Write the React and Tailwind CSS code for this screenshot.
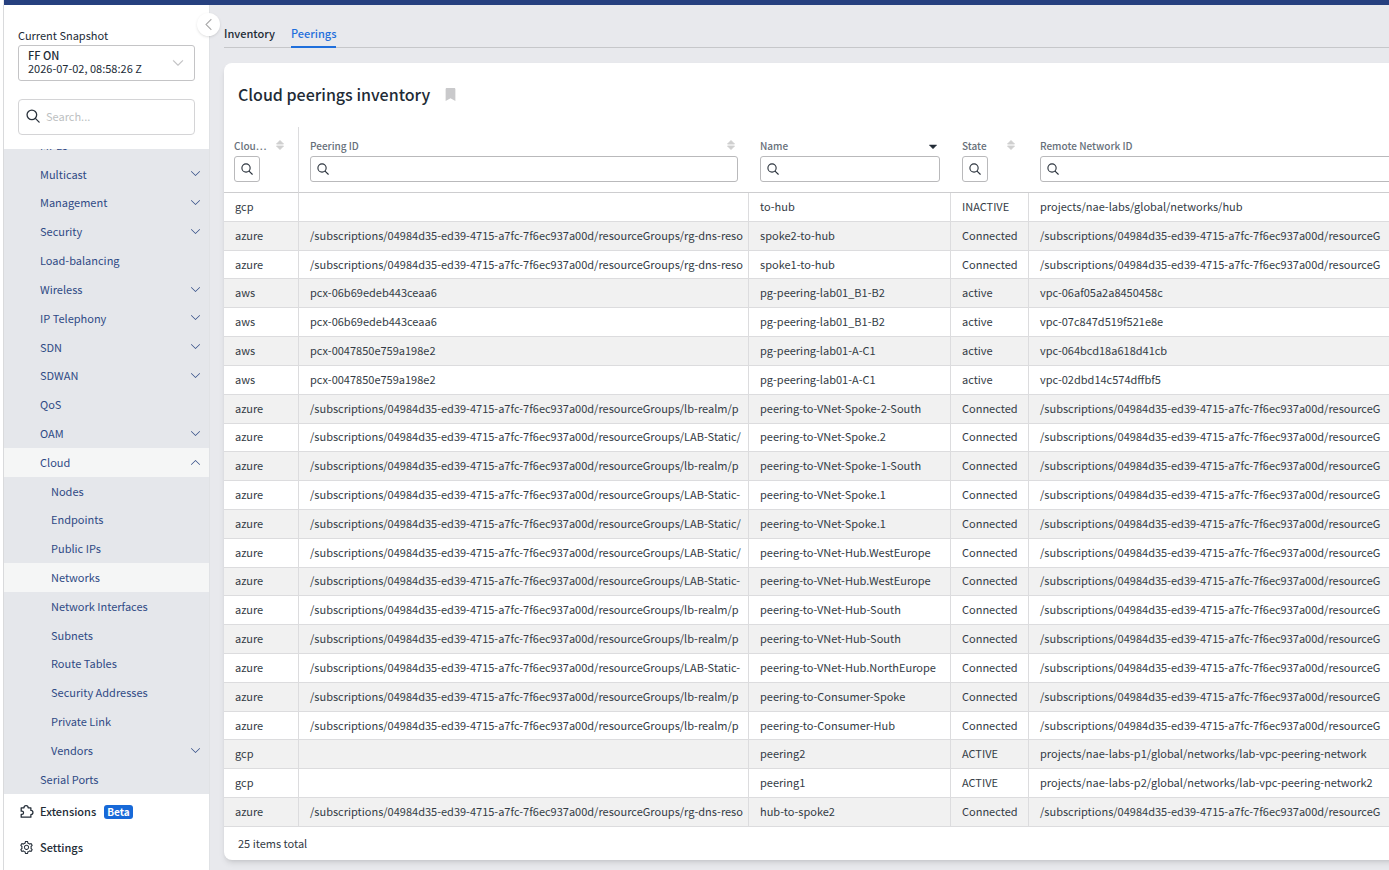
import React, { useState } from "react";
import { AiOutlineSetting } from "react-icons/ai";
import { BsChevronDown, BsChevronLeft, BsChevronUp } from "react-icons/bs";
import { FaBookmark } from "react-icons/fa";

const navItems = [
  { label: "Multicast", arrow: true },
  { label: "Management", arrow: true },
  { label: "Security", arrow: true },
  { label: "Load-balancing" },
  { label: "Wireless", arrow: true },
  { label: "IP Telephony", arrow: true },
  { label: "SDN", arrow: true },
  { label: "SDWAN", arrow: true },
  { label: "QoS" },
  { label: "OAM", arrow: true },
  { label: "Cloud", arrow: true, open: true, active: true },
  { label: "Nodes", child: true },
  { label: "Endpoints", child: true },
  { label: "Public IPs", child: true },
  { label: "Networks", child: true, active: true },
  { label: "Network Interfaces", child: true },
  { label: "Subnets", child: true },
  { label: "Route Tables", child: true },
  { label: "Security Addresses", child: true },
  { label: "Private Link", child: true },
  { label: "Vendors", child: true, arrow: true },
  { label: "Serial Ports" },
];

const remote = "/subscriptions/04984d35-ed39-4715-a7fc-7f6ec937a00d/resourceG";
const base = remote + "roups/";
const dns = base + "rg-dns-reso";
const realm = base + "lb-realm/p";
const lab = base + "LAB-Static/";
const labDash = base + "LAB-Static-";

const rows = [
  ["gcp", "", "to-hub", "INACTIVE", "projects/nae-labs/global/networks/hub"],
  ["azure", dns, "spoke2-to-hub", "Connected", remote],
  ["azure", dns, "spoke1-to-hub", "Connected", remote],
  ["aws", "pcx-06b69edeb443ceaa6", "pg-peering-lab01_B1-B2", "active", "vpc-06af05a2a8450458c"],
  ["aws", "pcx-06b69edeb443ceaa6", "pg-peering-lab01_B1-B2", "active", "vpc-07c847d519f521e8e"],
  ["aws", "pcx-0047850e759a198e2", "pg-peering-lab01-A-C1", "active", "vpc-064bcd18a618d41cb"],
  ["aws", "pcx-0047850e759a198e2", "pg-peering-lab01-A-C1", "active", "vpc-02dbd14c574dffbf5"],
  ["azure", realm, "peering-to-VNet-Spoke-2-South", "Connected", remote],
  ["azure", lab, "peering-to-VNet-Spoke.2", "Connected", remote],
  ["azure", realm, "peering-to-VNet-Spoke-1-South", "Connected", remote],
  ["azure", labDash, "peering-to-VNet-Spoke.1", "Connected", remote],
  ["azure", lab, "peering-to-VNet-Spoke.1", "Connected", remote],
  ["azure", lab, "peering-to-VNet-Hub.WestEurope", "Connected", remote],
  ["azure", labDash, "peering-to-VNet-Hub.WestEurope", "Connected", remote],
  ["azure", realm, "peering-to-VNet-Hub-South", "Connected", remote],
  ["azure", realm, "peering-to-VNet-Hub-South", "Connected", remote],
  ["azure", labDash, "peering-to-VNet-Hub.NorthEurope", "Connected", remote],
  ["azure", realm, "peering-to-Consumer-Spoke", "Connected", remote],
  ["azure", realm, "peering-to-Consumer-Hub", "Connected", remote],
  ["gcp", "", "peering2", "ACTIVE", "projects/nae-labs-p1/global/networks/lab-vpc-peering-network"],
  ["gcp", "", "peering1", "ACTIVE", "projects/nae-labs-p2/global/networks/lab-vpc-peering-network2"],
  ["azure", dns, "hub-to-spoke2", "Connected", remote],
];

const columns = [
  { label: "Cloud", short: "Clou…", sort: "none", small: true },
  { label: "Peering ID", sort: "none" },
  { label: "Name", sort: "desc" },
  { label: "State", sort: "none", small: true },
  { label: "Remote Network ID" },
];

const SearchIcon = ({ size }) => (
  <svg
    width={size}
    height={size}
    viewBox="0 0 16 16"
    fill="none"
    stroke="currentColor"
    strokeWidth="1.5"
    strokeLinecap="round"
    className="shrink-0 text-[#2b333d]"
  >
    <circle cx="6.7" cy="6.7" r="5.5" />
    <path d="M10.7 10.7L15 15" />
  </svg>
);

const PuzzleIcon = () => (
  <svg
    width="15"
    height="15"
    viewBox="0 0 24 24"
    fill="none"
    stroke="currentColor"
    strokeWidth="2"
    strokeLinejoin="round"
    className="shrink-0"
  >
    <path d="M3.5 6H8a3.3 3.3 0 0 1 6.6 0H19v4.2a3.3 3.3 0 0 1 0 6.6V21H3.5v-4.4h1.2a2.6 2.6 0 0 0 0-5.2H3.5z" />
  </svg>
);

const SortIcon = ({ sort }) => {
  if (sort === "desc") {
    return (
      <svg width="8" height="10" viewBox="0 0 8 10" className="text-[#222b36]">
        <path d="M0.3 5h7.4L4 8.8z" fill="currentColor" stroke="currentColor" strokeWidth="0.5" strokeLinejoin="round" />
      </svg>
    );
  }
  return (
    <svg width="8" height="10" viewBox="0 0 8 10" className="text-[#cfcfcf]">
      <path
        d="M0.5 4h7L4 0.5zM0.5 6h7L4 9.5z"
        fill="currentColor"
        stroke="currentColor"
        strokeWidth="0.9"
        strokeLinejoin="round"
      />
    </svg>
  );
};

const HeaderCell = ({ column, first }) => {
  const [value, setValue] = useState("");
  return (
    <th
      className={`border-b border-b-[#cdcdcf] pt-[11px] pr-[11px] text-left align-top font-medium ${
        first ? "border-r border-r-[#dcdcde] pl-[10px]" : "pl-[11px]"
      }`}
    >
      <div className="flex h-[14px] items-center justify-between pr-[3px] text-[10px] text-[#67707a]">
        <span>{column.short || column.label}</span>
        {column.sort && (
          <button type="button" aria-label={`Sort by ${column.label}`}>
            <SortIcon sort={column.sort} />
          </button>
        )}
      </div>
      <label
        className={`mt-1 flex h-[26px] items-center rounded-[3px] border border-[#b9b9bb] pb-px pl-[6px] ${
          column.small ? "w-[26px]" : "w-full"
        }`}
      >
        <SearchIcon size={12} />
        <input
          type="text"
          aria-label={`Filter ${column.label}`}
          value={value}
          onChange={(e) => setValue(e.target.value)}
          className="ml-1 w-full min-w-0 flex-1 bg-transparent text-[11px] outline-none"
        />
      </label>
    </th>
  );
};

const NavItem = ({ item }) => (
  <li className={`min-h-0 flex-1 ${item.active ? "bg-[#f5f6f6]" : ""}`}>
    <a
      href="#"
      className={`flex h-full items-center justify-between pr-2 pb-px ${item.child ? "pl-[47px]" : "pl-9"}`}
    >
      {item.label}
      {item.arrow && (item.open ? <BsChevronUp size={11} /> : <BsChevronDown size={11} />)}
    </a>
  </li>
);

const Sidebar = () => {
  const [search, setSearch] = useState("");
  return (
    <aside className="relative flex w-[207px] shrink-0 flex-col border-r border-l border-r-[#e0e2e5] border-l-[#d9dadc] bg-white">
      <div className="flex h-[144px] shrink-0 flex-col px-[14px] pt-[22px]">
        <span className="text-[11px] leading-4 text-[#222b36]">Current Snapshot</span>
        <button
          type="button"
          aria-label="Current Snapshot"
          className="mt-[2px] flex h-9 items-center justify-between rounded-[3px] border border-[#c4c4c6] pr-[10px] pb-[2px] pl-[9px] text-left text-[11px] leading-[13px] text-[#222b36]"
        >
          <span>
            <span className="block font-medium">FF ON</span>
            <span className="block">2026-07-02, 08:58:26 Z</span>
          </span>
          <BsChevronDown size={12} strokeWidth={0.6} className="mt-[2px] text-[#bcbcbe]" />
        </button>
        <label className="mt-[18px] flex h-9 items-center gap-[6px] rounded border border-[#d4d4d6] pb-[2px] pl-[7px]">
          <SearchIcon size={14} />
          <input
            type="text"
            aria-label="Search"
            placeholder="Search..."
            value={search}
            onChange={(e) => setSearch(e.target.value)}
            className="w-full min-w-0 text-[11px] outline-none placeholder:text-[#bdbfc2]"
          />
        </label>
      </div>

      <ul className="flex min-h-0 flex-1 flex-col overflow-hidden bg-[#e5e7eb] text-[11px] text-[#2f4a85]">
        <li className="flex h-[11px] shrink-0 flex-col justify-end overflow-hidden">
          <a href="#" className="pb-[7px] pl-9 leading-4">MPLS</a>
        </li>
        {navItems.map((item) => (
          <NavItem key={item.label} item={item} />
        ))}
      </ul>

      <div className="h-[76px] shrink-0 text-[11px] font-medium text-[#222b36]">
        <a href="#" className="flex h-9 items-center pb-[2px] pl-[15px]">
          <PuzzleIcon />
          <span className="ml-[6px]">Extensions</span>
          <span className="mt-px ml-2 rounded-[3px] bg-[#1769d8] px-[3px] text-[10px] leading-[14px] font-bold text-white">
            Beta
          </span>
        </a>
        <a href="#" className="flex h-9 items-center pb-[2px] pl-[15px]">
          <AiOutlineSetting size={15} />
          <span className="ml-[6px]">Settings</span>
        </a>
      </div>

      {/* Collapse button */}
      <button
        type="button"
        aria-label="Collapse sidebar"
        className="absolute top-2 -right-[11px] z-10 flex h-[23px] w-[23px] items-center justify-center rounded-full bg-white text-[#a9a9ab] shadow"
      >
        <BsChevronLeft size={13} strokeWidth={0.6} />
      </button>
    </aside>
  );
};

export default function App() {
  return (
    <div className="flex h-screen flex-col overflow-hidden border-l-[3px] border-l-white bg-[#e8e9ed] font-['Noto_Sans_CJK_SC',sans-serif]">
      <header className="ml-px h-[5px] shrink-0 bg-[#26407f]" />
      <div className="flex min-h-0 flex-1">
        <Sidebar />
        <main className="-mr-6 flex min-w-0 flex-1 flex-col pb-[10px] pl-[14px]">
          <nav className="flex h-[43px] shrink-0 gap-4 border-b border-[#c6c7ca] text-[11px] font-medium">
            <a href="#" className="pt-5 text-[#222b36]">Inventory</a>
            <a href="#" className="-mb-px border-b-2 border-[#1f6fdc] pt-5 text-[#1f6fdc]">Peerings</a>
          </nav>

          <section className="mt-[15px] flex min-h-0 flex-1 flex-col rounded-lg bg-white shadow-md">
            <div className="flex h-16 shrink-0 items-center gap-[14px] pb-[2px] pl-[14px]">
              <h1 className="text-[16px] font-medium text-[#222b36]">Cloud peerings inventory</h1>
              <button type="button" aria-label="Bookmark">
                <FaBookmark size={13} className="text-[#c9c9cb]" />
              </button>
            </div>

            <div className="min-h-0 flex-1">
              <table className="h-full w-full table-fixed border-separate border-spacing-0">
                <colgroup>
                  <col className="w-[75px]" />
                  <col className="w-[450px]" />
                  <col className="w-[202px]" />
                  <col className="w-[78px]" />
                  <col />
                </colgroup>
                <thead>
                  <tr className="h-[66px]">
                    {columns.map((column, i) => (
                      <HeaderCell key={column.label} column={column} first={i === 0} />
                    ))}
                  </tr>
                </thead>
                <tbody className="text-[11px] leading-4 text-[#333b45]">
                  {rows.map((row, i) => (
                    <tr key={i} className="even:bg-[#f1f1f1]">
                      {row.map((cell, j) => (
                        <td
                          key={j}
                          className="overflow-hidden border-r border-b border-[#dcdcde] pb-[2px] pl-[11px] whitespace-nowrap"
                        >
                          {cell}
                        </td>
                      ))}
                    </tr>
                  ))}
                </tbody>
              </table>
            </div>

            <div className="flex h-[33px] shrink-0 items-center pl-[14px] text-[11px] text-[#333b45]">
              25 items total
            </div>
          </section>
        </main>
      </div>
    </div>
  );
}
